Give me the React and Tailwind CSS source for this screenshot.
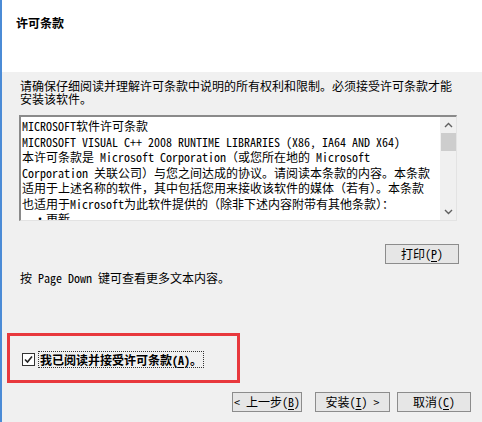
const LICENSE_LINES = [
  'MICROSOFT软件许可条款',
  'MICROSOFT VISUAL C++ 2008 RUNTIME LIBRARIES (X86, IA64 AND X64)',
  '本许可条款是 Microsoft Corporation（或您所在地的 Microsoft',
  'Corporation 关联公司）与您之间达成的协议。请阅读本条款的内容。本条款',
  '适用于上述名称的软件，其中包括您用来接收该软件的媒体（若有）。本条款',
  '也适用于Microsoft为此软件提供的（除非下述内容附带有其他条款）：',
  '  •更新',
];

// 带下划线的快捷键字母
function Key({ children }) {
  return <span className="underline underline-offset-2">{children}</span>;
}

function WinButton({ children, className = '' }) {
  return (
    <button
      className={`h-[20px] border border-[#8c8c8c] bg-[#e6e6e6] text-[12px] leading-none text-black ${className}`}
    >
      {children}
    </button>
  );
}

function Chevron({ up }) {
  return (
    <svg width="9" height="6" viewBox="0 0 9 6" className="text-[#606060]">
      <path
        d={up ? 'M1 5 L4.5 1.5 L8 5' : 'M1 1 L4.5 4.5 L8 1'}
        fill="none"
        stroke="currentColor"
        strokeWidth="1.4"
      />
    </svg>
  );
}

export default function App() {
  return (
    <div className="flex h-[422px] w-[482px] flex-col overflow-hidden border-l-2 border-[#4b8bd6] font-['Noto_Sans_Mono_CJK_SC','Noto_Sans_CJK_SC',sans-serif] text-[12px] text-black">
      {/* 标题区 */}
      <div className="h-[72px] shrink-0 bg-white pl-[14px] pt-[16px]">
        <h1 className="text-[12px] font-bold leading-[14px]">许可条款</h1>
      </div>

      {/* 主体 */}
      <div className="flex flex-1 flex-col bg-[#f0f0f0] pt-[7px]">
        <p className="w-[454px] pl-[18px] leading-[13px]">
          请确保仔细阅读并理解许可条款中说明的所有权利和限制。必须接受许可条款才能安装该软件。
        </p>

        <div className="ml-[17px] mt-[10px] flex h-[106px] w-[438px] border-b border-l-2 border-r border-t-2 border-b-[#e3e3e3] border-l-[#8a8a8a] border-r-[#e3e3e3] border-t-[#8a8a8a] bg-white">
          <div className="flex-1 overflow-hidden pl-[1px] pt-[1px]">
            {LICENSE_LINES.map((line, i) => (
              <div key={i} className="whitespace-pre leading-[15.5px]">
                {line}
              </div>
            ))}
          </div>
          <div className="flex w-[16px] shrink-0 flex-col items-center bg-[#f0f0f0]">
            <div className="flex h-[16px] items-center justify-center">
              <Chevron up />
            </div>
            <div className="h-[18px] w-[15px] bg-[#cdcdcd]" />
            <div className="flex-1" />
            <div className="flex h-[16px] items-center justify-center">
              <Chevron />
            </div>
          </div>
        </div>

        <div className="mr-[23px] mt-[23px] flex justify-end">
          <WinButton className="w-[74px]">
            打印(<Key>P</Key>)
          </WinButton>
        </div>

        <p className="mt-[7px] pl-[18px] leading-[14px]">按 Page Down 键可查看更多文本内容。</p>

        {/* 高亮框 */}
        <div className="ml-[5px] mt-[48px] h-[50px] w-[233px] border-[3px] border-[#e8383d] pl-[12px] pt-[15px]">
          <div className="flex items-center gap-[3px]">
            <span className="flex h-[13px] w-[13px] items-center justify-center border border-[#333] bg-white">
              <svg width="9" height="9" viewBox="0 0 9 9">
                <path d="M1 4.5 L3.5 7 L8 1.5" fill="none" stroke="#222" strokeWidth="1.6" />
              </svg>
            </span>
            <span className="border border-dotted border-[#333] px-[1px] font-bold leading-[15px]">
              我已阅读并接受许可条款(<Key>A</Key>)。
            </span>
          </div>
        </div>

        <div className="mt-[9px] flex justify-end pr-[11px]">
          <WinButton className="w-[70px]">
            &lt; 上一步(<Key>B</Key>)
          </WinButton>
          <WinButton className="ml-[13px] w-[75px]">
            安装(<Key>I</Key>) &gt;
          </WinButton>
          <WinButton className="ml-[7px] w-[74px]">
            取消(<Key>C</Key>)
          </WinButton>
        </div>
      </div>
    </div>
  );
}
